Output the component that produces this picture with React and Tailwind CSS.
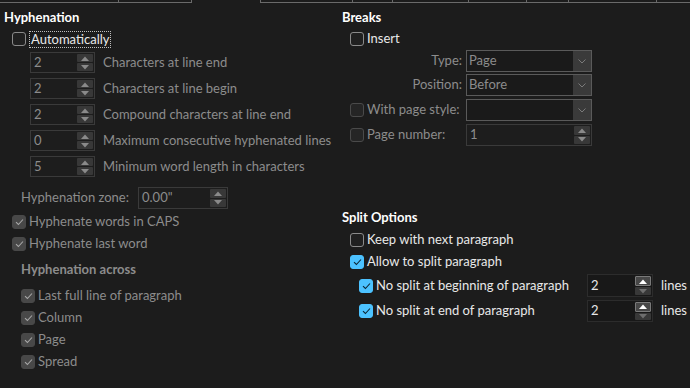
const FONT = { fontFamily: 'Lato, "Noto Sans", sans-serif' };

function Check({ checked, disabled, accent }) {
  const box = accent
    ? "bg-[#4cc2ff] border-[#4cc2ff]"
    : checked
    ? "bg-[#484848] border-[#484848]"
    : disabled
    ? "bg-[#252525] border-[#4a4a4a]"
    : "bg-[#202020] border-[#8a8a8a]";
  return (
    <span
      className={`w-[14px] h-[14px] shrink-0 rounded-[3px] border flex items-center justify-center ${box}`}
    >
      {checked && (
        <svg width="9" height="8" viewBox="0 0 9 8">
          <path
            d="M1 4.2 L3.4 6.5 L8 1.5"
            fill="none"
            stroke={accent ? "#0b2533" : "#a8a8a8"}
            strokeWidth="1.1"
          />
        </svg>
      )}
    </span>
  );
}

function CheckRow({ label, checked, disabled, accent, focus, h = "h-[22px]", className = "" }) {
  return (
    <div className={`flex items-center ${h} ${className}`}>
      <Check checked={checked} disabled={disabled} accent={accent} />
      <span
        className={`ml-[3px] whitespace-nowrap ${
          disabled ? "text-[#8c8c8c]" : "text-[#e8e8e8]"
        } ${focus ? "border border-dotted border-[#bdbdbd] px-[1px] leading-[15px]" : ""}`}
      >
        {label}
      </span>
    </div>
  );
}

function Tri({ up, color }) {
  return (
    <svg width="8" height="5" viewBox="0 0 8 5">
      <path d={up ? "M0 5 L4 0.5 L8 5 Z" : "M0 0 L4 4.5 L8 0 Z"} fill={color} />
    </svg>
  );
}

function Spin({ value, w, enabled }) {
  return (
    <div
      className={`flex shrink-0 h-full border ${
        enabled ? "border-[#2c2c2c] bg-[#181818]" : "border-[#3a3a3a] bg-[#1d1d1d]"
      }`}
      style={{ width: w }}
    >
      <span
        className={`flex-1 flex items-center pl-[3px] ${
          enabled ? "text-[#e8e8e8]" : "text-[#8c8c8c]"
        }`}
      >
        {value}
      </span>
      <div className="w-[18px] flex flex-col gap-[1px] p-[1px]">
        <div
          className={`flex-1 flex items-center justify-center rounded-[1px] ${
            enabled ? "bg-[#474747] border border-[#7a7a7a]" : "bg-[#383838]"
          }`}
        >
          <Tri up color={enabled ? "#ffffff" : "#8a8a8a"} />
        </div>
        <div className="flex-1 flex items-center justify-center rounded-[1px] bg-[#383838]">
          <Tri color={enabled ? "#6e6e6e" : "#8a8a8a"} />
        </div>
      </div>
    </div>
  );
}

function Combo({ value }) {
  return (
    <div className="flex shrink-0 w-[126px] h-full border border-[#5a5a5a] bg-[#1a1a1a]">
      <span className="flex-1 flex items-center pl-[2px] text-[#8c8c8c]">{value}</span>
      <div className="w-[18px] flex items-center justify-center bg-[#3a3a3a]">
        <svg width="8" height="5" viewBox="0 0 8 5">
          <path d="M0.5 0.5 L4 4 L7.5 0.5" fill="none" stroke="#7a7a7a" strokeWidth="1" />
        </svg>
      </div>
    </div>
  );
}

function SpinRow({ value, label, top }) {
  return (
    <div className={`flex items-center h-[21px] pl-[30px] ${top}`}>
      <Spin value={value} w={65} />
      <span className="ml-[8px] text-[#8c8c8c] whitespace-nowrap">{label}</span>
    </div>
  );
}

function Tabs() {
  return (
    <div className="flex h-[3px]">
      <div className="w-[192px] h-full flex border-b border-[#6a6a6a]">
        <div className="w-[119px] border-r border-[#6a6a6a]" />
        <div className="flex-1 border-r border-[#6a6a6a]" />
      </div>
      <div className="w-[68px]" />
      <div className="flex-1 h-full flex border-b border-l border-[#6a6a6a]">
        <div className="w-[92px] border-r border-[#6a6a6a]" />
        <div className="w-[40px] border-r border-[#6a6a6a]" />
        <div className="w-[76px] border-r border-[#6a6a6a]" />
        <div className="w-[58px] border-r border-[#6a6a6a]" />
        <div className="w-[42px] border-r border-[#6a6a6a]" />
        <div className="w-[88px] border-r border-[#6a6a6a]" />
        <div className="flex-1" />
      </div>
    </div>
  );
}

export default function App() {
  return (
    <div className="w-[690px] h-[388px] bg-[#1c1c1c] text-[13px] overflow-hidden" style={FONT}>
      <Tabs />
      <div className="flex">
        {/* left column */}
        <div className="w-[342px] flex flex-col">
          <div className="h-[26px] mt-[2px] pl-[4px] flex items-center font-bold text-white">
            Hyphenation
          </div>
          <CheckRow label="Automatically" focus h="h-[16px]" className="pl-[12px]" />
          <SpinRow value="2" label="Characters at line end" top="mt-[5px]" />
          <SpinRow value="2" label="Characters at line begin" top="mt-[5px]" />
          <SpinRow value="2" label="Compound characters at line end" top="mt-[5px]" />
          <SpinRow value="0" label="Maximum consecutive hyphenated lines" top="mt-[5px]" />
          <SpinRow value="5" label="Minimum word length in characters" top="mt-[5px]" />
          <div className="flex items-center h-[22px] mt-[10px] pl-[21px]">
            <span className="w-[117px] text-[#8c8c8c]">Hyphenation zone:</span>
            <Spin value={'0.00"'} w={90} />
          </div>
          <CheckRow label="Hyphenate words in CAPS" checked disabled className="mt-[2px] pl-[12px]" />
          <CheckRow label="Hyphenate last word" checked disabled className="pl-[12px]" />
          <div className="h-[22px] mt-[4px] pl-[21px] flex items-center font-bold text-[#8c8c8c]">
            Hyphenation across
          </div>
          <div className="mt-[4px] pl-[21px] flex flex-col">
            <CheckRow label="Last full line of paragraph" checked disabled />
            <CheckRow label="Column" checked disabled />
            <CheckRow label="Page" checked disabled />
            <CheckRow label="Spread" checked disabled />
          </div>
        </div>

        {/* right column */}
        <div className="flex-1 flex flex-col">
          <div className="h-[26px] mt-[2px] flex items-center font-bold text-white">Breaks</div>
          <CheckRow label="Insert" h="h-[16px]" className="pl-[8px]" />
          <div className="flex items-center h-[22px] mt-[3px]">
            <span className="w-[120px] text-right text-[#8c8c8c]">Type:</span>
            <div className="ml-[4px] h-full">
              <Combo value="Page" />
            </div>
          </div>
          <div className="flex items-center h-[22px] mt-[2px]">
            <span className="w-[120px] text-right text-[#8c8c8c]">Position:</span>
            <div className="ml-[4px] h-full">
              <Combo value="Before" />
            </div>
          </div>
          <div className="flex items-center h-[22px] mt-[3px]">
            <div className="w-[120px] pl-[8px]">
              <CheckRow label="With page style:" disabled />
            </div>
            <div className="ml-[4px] h-full">
              <Combo value="" />
            </div>
          </div>
          <div className="flex items-center h-[22px] mt-[3px]">
            <div className="w-[120px] pl-[8px]">
              <CheckRow label="Page number:" disabled />
            </div>
            <div className="ml-[4px] h-full">
              <Spin value="1" w={126} />
            </div>
          </div>

          <div className="h-[22px] mt-[61px] flex items-center font-bold text-white">
            Split Options
          </div>
          <CheckRow label="Keep with next paragraph" className="pl-[8px]" />
          <CheckRow label="Allow to split paragraph" checked accent className="pl-[8px]" />
          <div className="flex items-center h-[23px] mt-[1px] pl-[17px]">
            <Check checked accent />
            <span className="ml-[3px] w-[211px] shrink-0 text-[#e8e8e8] whitespace-nowrap">
              No split at beginning of paragraph
            </span>
            <div className="h-full">
              <Spin value="2" w={66} enabled />
            </div>
            <span className="ml-[8px] text-[#e8e8e8]">lines</span>
          </div>
          <div className="flex items-center h-[22px] mt-[3px] pl-[17px]">
            <Check checked accent />
            <span className="ml-[3px] w-[211px] shrink-0 text-[#e8e8e8] whitespace-nowrap">
              No split at end of paragraph
            </span>
            <div className="h-full">
              <Spin value="2" w={66} enabled />
            </div>
            <span className="ml-[8px] text-[#e8e8e8]">lines</span>
          </div>
        </div>
      </div>
    </div>
  );
}
